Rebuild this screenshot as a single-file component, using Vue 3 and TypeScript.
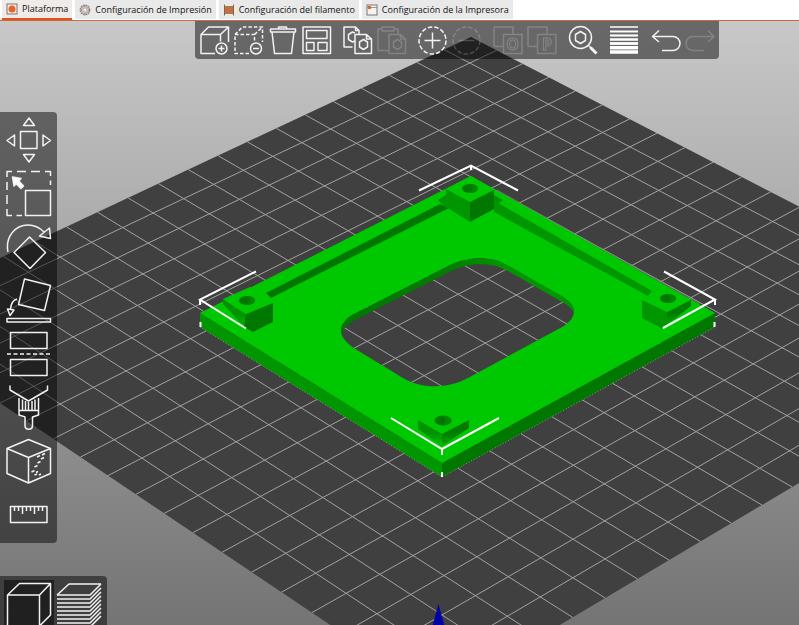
<script setup lang="ts">
import { ref } from 'vue'

type Point = [number, number]

interface Tab {
  id: string
  label: string
}

const tabs: Tab[] = [
  { id: 'plater', label: 'Plataforma' },
  { id: 'print', label: 'Configuración de Impresión' },
  { id: 'filament', label: 'Configuración del filamento' },
  { id: 'printer', label: 'Configuración de la Impresora' },
]
const activeTab = ref('plater')
const activeView = ref('editor')

// Perspective projection of the print bed: u and v run from 0 to 1.
const DIVISIONS = 20
function project(u: number, v: number): Point {
  const w = 1 - 0.11586 * u - 0.10416 * v
  return [
    (455.4 * u - 584.8 * v + 471) / w,
    (259.4 * u + 247.5 * v + 37) / w,
  ]
}
function segment(a: Point, b: Point): string {
  return `M${a[0].toFixed(1)} ${a[1].toFixed(1)}L${b[0].toFixed(1)} ${b[1].toFixed(1)}`
}
const bedOutline = [project(0, 0), project(1, 0), project(1, 1), project(0, 1)]
  .map((p) => p.join(','))
  .join(' ')
const gridPath = Array.from({ length: DIVISIONS - 1 }, (_, i) => (i + 1) / DIVISIONS)
  .map((t) => segment(project(t, 0), project(t, 1)) + segment(project(0, t), project(1, t)))
  .join('')

const windowPath =
  'M352 315L450 265C466 257 490 255 507 265L563 297C578 306 577 317 564 326L468 378C450 388 423 390 403 378L357 350C337 338 336 325 352 315Z'
const platePath = 'M200 313L471 176L715 313L442 463Z'

const layerRows = [14, 18, 22, 26, 30, 34, 38, 42, 46]
</script>

<template>
  <div class="app">
    <nav class="tabs" aria-label="Secciones">
      <button
        v-for="tab in tabs"
        :key="tab.id"
        type="button"
        class="tab"
        :class="{ active: activeTab === tab.id }"
        @click="activeTab = tab.id"
      >
        <svg v-if="tab.id === 'plater'" class="tab-icon" viewBox="0 0 12 12">
          <rect x="1" y="1" width="10" height="10" fill="#fbe9e0" stroke="#777" />
          <circle cx="6" cy="6" r="3.5" fill="#e4662a" />
        </svg>
        <svg v-else-if="tab.id === 'print'" class="tab-icon" viewBox="0 0 12 12" fill="none">
          <circle cx="6" cy="6" r="4.8" stroke="#8a8080" stroke-width="1.2" stroke-dasharray="2 0.5" />
          <circle cx="6" cy="6" r="3.6" stroke="#a59a98" />
          <circle cx="6" cy="6" r="2.200" stroke="#b89a90" fill="#f4f0ee" />
        </svg>
        <svg v-else-if="tab.id === 'filament'" class="tab-icon" viewBox="0 0 12 12">
          <rect x="1" y="2" width="10" height="8" fill="#bb7347" />
          <path d="M1.500 0.500V11.500M10.500 0.500V11.500" stroke="#8b6048" />
        </svg>
        <svg v-else class="tab-icon" viewBox="0 0 12 12">
          <rect x="1" y="1" width="10" height="10" fill="#f6f4f2" stroke="#777" />
          <path d="M1 3.500H11" stroke="#999" />
          <rect x="2" y="2" width="3" height="3" fill="#e4662a" />
        </svg>
        <span>{{ tab.label }}</span>
      </button>
    </nav>

    <main class="viewport">
      <svg class="scene" viewBox="0 21 799 604" preserveAspectRatio="xMidYMin slice">
        <defs>
          <linearGradient id="wall" x1="0" x2="1">
            <stop offset="0" stop-color="#007800" />
            <stop offset="0.45" stop-color="#007d00" />
            <stop offset="0.7" stop-color="#009600" />
            <stop offset="1" stop-color="#009600" />
          </linearGradient>
          <linearGradient id="foot-left" x1="0" x2="0" y1="0" y2="1">
            <stop offset="0.5" stop-color="#009200" />
            <stop offset="1" stop-color="#00be00" />
          </linearGradient>
          <linearGradient id="foot-right" x1="0" x2="0" y1="0" y2="1">
            <stop offset="0.5" stop-color="#007c00" />
            <stop offset="1" stop-color="#00a800" />
          </linearGradient>
          <mask id="wall-mask" maskUnits="userSpaceOnUse" x="320" y="240" width="280" height="160">
            <path :d="windowPath" fill="#fff" />
            <path :d="windowPath" fill="#000" transform="translate(1 6)" />
          </mask>
        </defs>

        <polygon :points="bedOutline" fill="#404040" />
        <path :d="gridPath" stroke="#a2a2a2" stroke-width="1" fill="none" />
        <path d="M438.500 604L444.500 626H432.500Z" fill="#0000a8" />

        <path d="M200 313L442 463V477L200 327Z" fill="#009600" />
        <path d="M442 463L715 313V327L442 477Z" fill="#007800" />
        <path :d="platePath + windowPath" fill="#00c800" fill-rule="evenodd" />
        <path :d="windowPath" fill="url(#wall)" mask="url(#wall-mask)" />
        <path d="M200 327L442 477L715 327" stroke="#b5c8b5" stroke-width="0.6" stroke-dasharray="1 2" fill="none" />
        <path d="M497 190L700 304" stroke="#6f8a6f" stroke-width="0.7" />

        <path d="M266 293L440 204L449 208L271 298Z" fill="#007800" />
        <path d="M494 204L498 203L652 291L648 296L494 212Z" fill="#009600" />
        <path d="M438 200L446 195V208ZM494 195L503 200L494 207Z" fill="#009200" />

        <path d="M471 176L494 190L470 202L446 189Z" fill="#00c800" />
        <path d="M446 189L470 202V222L446 207Z" fill="#009600" />
        <path d="M470 202L494 190V209L470 222Z" fill="#007800" />

        <path d="M223 299L246 314V329L223 304Z" fill="url(#foot-left)" />
        <path d="M223 299L250 287L273 303L246 314Z" fill="#00c800" />
        <path d="M246 314L273 303V322L253 332L244 327Z" fill="#007800" />

        <path d="M667 312L691 300V306L667 325Z" fill="url(#foot-right)" />
        <path d="M642 300L667 312V325L661 328L642 318Z" fill="#009600" />

        <path d="M418 420L442 434V446L418 429Z" fill="url(#foot-left)" />
        <path d="M442 434L469 420V428L442 446Z" fill="url(#foot-right)" />

        <g fill="#007800">
          <ellipse cx="470" cy="188.500" rx="8" ry="4.500" />
          <ellipse cx="247" cy="300.500" rx="8" ry="4.500" />
          <ellipse cx="668" cy="298.500" rx="8" ry="4.500" />
          <ellipse cx="443" cy="420.500" rx="8.500" ry="5" />
        </g>
        <g fill="#008600">
          <path d="M470 184C475 184 478 186 478 189C477 191 474 193 470 193C473 190 473 187 470 184Z" />
          <path d="M247 296C252 296 255 298 255 301C254 303 251 305 247 305C250 302 250 299 247 296Z" />
          <path d="M668 294C673 294 676 296 676 299C675 301 672 303 668 303C671 300 671 297 668 294Z" />
          <path d="M443 416C448 416 451.500 418 451.500 421C451 423 447 425.500 443 425.500C446 422 446 419 443 416Z" />
        </g>

        <g stroke="#fff" stroke-width="2" fill="none">
          <path d="M419 190.500L471 165.500L518 190.500M471 165V170" />
          <path d="M256 271.500L200 299.500L246 328.500M200 299V305" />
          <path d="M664 271.500L715 299.500L663 328M715 299V305" />
          <path d="M391 418L442 449L499 418M442 449V455" />
          <path d="M200.500 322V327M714.500 322V327M442 472V477" />
        </g>
      </svg>

      <div class="toolbar top-bar" role="toolbar" aria-label="Objetos">
        <div class="group">
          <button type="button" class="tool" aria-label="Añadir">
            <svg viewBox="0 0 30 30">
              <path d="M15 28.500H1V9.500L8.500 2H28.500V17M1 9.500H20.500V16.500M20.500 9.500L28.500 2" />
              <circle cx="21.500" cy="23.500" r="5.500" />
              <path d="M18.500 23.500H24.500M21.500 20.500V26.500" />
            </svg>
          </button>
          <button type="button" class="tool" aria-label="Borrar">
            <svg viewBox="0 0 30 30">
              <path stroke-dasharray="3.500 2" d="M15 28.500H1V9.500L8.500 2H28.500V17M1 9.500H20.500V16.500M20.500 9.500L28.500 2" />
              <circle cx="22" cy="23.500" r="5.500" />
              <path d="M19 23.500H25" />
            </svg>
          </button>
          <button type="button" class="tool" aria-label="Borrar todo">
            <svg viewBox="0 0 30 30">
              <path d="M2.500 4H27.500V7H2.500ZM10.500 4V2H18.500V4M4 7L6.500 28.500H23.500L26 7" />
            </svg>
          </button>
          <button type="button" class="tool" aria-label="Organizar">
            <svg viewBox="0 0 30 30">
              <path d="M1 2H28.500V28.500H1ZM4.500 5.500H25V13.500H4.500ZM4.500 17.500H12V25.500H4.500ZM16 17.500H25V25.500H16Z" />
            </svg>
          </button>
        </div>
        <div class="group">
          <button type="button" class="tool" aria-label="Copiar">
            <svg viewBox="0 0 30 30">
              <path d="M9.500 22H1V2H12.500L16 5.500V9M12.500 2V5.500H16M12 9.500H23.500L28.500 14V28.500H12ZM23.500 9.500V14H28.500" />
              <path d="M12 8L9.500 7L5.500 9.500V14.500L9.500 17L12 16M20.500 14.500L24.500 17V22L20.500 24.500L16.500 22V17Z" />
            </svg>
          </button>
          <button type="button" class="tool" aria-label="Pegar" disabled>
            <svg viewBox="0 0 30 30">
              <path d="M11 25.500H1V4H5M17 4H21V9M5 2H17V6H5ZM12 9.500H23.500L28.500 14V28.500H12ZM23.500 9.500V14H28.500" />
              <path d="M20.500 14.500L24.500 17V22L20.500 24.500L16.500 22V17Z" />
            </svg>
          </button>
        </div>
        <div class="group">
          <button type="button" class="tool" aria-label="Añadir instancia">
            <svg viewBox="0 0 30 30">
              <circle cx="14.500" cy="15.500" r="13.500" stroke-dasharray="4.500 2" />
              <path d="M6.500 15.500H22.500M14.500 7.500V23.500" />
            </svg>
          </button>
          <button type="button" class="tool" aria-label="Eliminar instancia" disabled>
            <svg viewBox="0 0 30 30">
              <circle cx="14.500" cy="15.500" r="13.500" stroke-dasharray="4.500 2" />
              <path d="M6.500 15.500H22.500" />
            </svg>
          </button>
        </div>
        <div class="group">
          <button type="button" class="tool" aria-label="Separar en objetos" disabled>
            <svg viewBox="0 0 30 30">
              <path d="M10 21.500H1V2H20V9.500M10.500 9.500H29V28.500H10.500Z" />
              <text x="19.500" y="25">O</text>
            </svg>
          </button>
          <button type="button" class="tool" aria-label="Separar en partes" disabled>
            <svg viewBox="0 0 30 30">
              <path d="M10 21.500H1V2H20V9.500M10.500 9.500H29V28.500H10.500Z" />
              <text x="20" y="25">P</text>
            </svg>
          </button>
        </div>
        <div class="group">
          <button type="button" class="tool" aria-label="Buscar">
            <svg viewBox="0 0 30 30">
              <circle cx="12.500" cy="12.500" r="11" />
              <path d="M12.500 6.500L17.500 9.500V15.500L12.500 18.500L7.500 15.500V9.500Z" />
              <path d="M20.500 20.500L23 23" />
              <path d="M22.500 22.500L28.500 28.500" stroke-width="3" />
            </svg>
          </button>
        </div>
        <div class="group">
          <button type="button" class="tool" aria-label="Altura de capa variable">
            <svg class="bars" viewBox="0 0 30 30">
              <path d="M1 2H29" stroke-width="1.500" />
              <path d="M1 6.500H29" stroke-width="2" />
              <path d="M1 10.500H29" stroke-width="2.200" />
              <path d="M1 14.500H29" stroke-width="2.500" />
              <path d="M1 18.500H29" stroke-width="2.800" />
              <path d="M1 22.700H29M1 27H29" stroke-width="3.400" />
            </svg>
          </button>
        </div>
        <div class="group">
          <button type="button" class="tool" aria-label="Deshacer">
            <svg viewBox="0 0 30 30">
              <path d="M9 5.500L2.500 11.500L9 17M2.500 11.500H23A7 7 0 0 1 23 25.500H12" />
            </svg>
          </button>
          <button type="button" class="tool" aria-label="Rehacer" disabled>
            <svg viewBox="0 0 30 30">
              <path d="M24 5.500L30 11.500L24 17M30 11.500H9A7 7 0 0 0 9 25.500H20" />
            </svg>
          </button>
        </div>
      </div>

      <div class="toolbar side-bar" role="toolbar" aria-label="Transformar">
        <button type="button" class="gizmo" aria-label="Mover">
          <svg viewBox="0 0 46 46">
            <path d="M14.500 14.500H31V31.500H14.500ZM17.500 8.500H28.500L23 1ZM17.500 37.500H28.500L23 45ZM8.500 18V29L1 23.500ZM37 18V29L44.500 23.500Z" />
          </svg>
        </button>
        <button type="button" class="gizmo" aria-label="Escalar">
          <svg viewBox="0 0 46 46">
            <path d="M1 7V1.500H6M11 1.500H20M25 1.500H34M39 1.500H44.500V6M44.500 10.500V15M1 12V20M1 25V34M1 39V45.500H6M10.500 45.500H16" />
            <path d="M19.500 20.500H44.500V45.500H19.500Z" />
            <path class="solid" d="M6.500 7L15 8.500L12.800 11L17.500 16L15 18.500L10.200 13.700L8 16Z" />
          </svg>
        </button>
        <button type="button" class="gizmo" aria-label="Rotar">
          <svg viewBox="0 0 46 46">
            <path d="M2 29C-1 14 9 2 22 2C29 2 34 5 38 9M33.500 13L43.500 5L44.500 15.500ZM23.500 14L39.500 29.500L24 45.500L8 29.500Z" />
          </svg>
        </button>
        <button type="button" class="gizmo" aria-label="Poner en cara">
          <svg viewBox="0 0 46 46">
            <path d="M18.500 3L44.500 9.500L38.500 34.500L12.500 28.500ZM11 23C7 24 5 28 4.500 33M1.500 33L8 34L4 39.500ZM1 42.500H44.500V46H1Z" />
          </svg>
        </button>
        <button type="button" class="gizmo" aria-label="Cortar">
          <svg viewBox="0 0 46 46">
            <path d="M4.500 3.500H41V19.500H4.500ZM4.500 30.500H41V46.500H4.500Z" />
            <path d="M1 25H45" stroke-dasharray="4 2.500" />
          </svg>
        </button>
        <button type="button" class="gizmo" aria-label="Pintar soportes">
          <svg viewBox="0 0 46 46">
            <path d="M4 3.500V8L22.500 19L41.500 8V3.500M13 16V33L19 35V43.500C19 48.500 26.500 48.500 26.500 43.500V35L32.500 33V16M13 28.500H32.500M16.500 17.500V28.500M19.500 19V28.500M22.500 20V28.500M26 19V28.500M29 17.500V28.500" />
          </svg>
        </button>
        <button type="button" class="gizmo" aria-label="Pintar costuras">
          <svg viewBox="0 0 46 46">
            <path d="M1 13.500L22.500 4.500L44.500 13.500V38.500L22.500 48L1 38.500ZM1 13.500L22.500 22.500L44.500 13.500M22.500 22.500V48" />
            <path d="M31 22L34 20.500M36 20L39 18.500M35 24L38 22.500M31.500 28L34.500 26.500M28.500 32L31.500 30.500M25.500 37L28.500 35.500M30 37.500L32 36.500M28.500 40L31 39M33 40L35 39" />
          </svg>
        </button>
        <button type="button" class="gizmo" aria-label="Medir">
          <svg viewBox="0 0 46 46">
            <path d="M4.500 18.500H41V34.500H4.500ZM8.500 18.500V23M12.500 18.500V23M16.500 18.500V26M20.500 18.500V23M24.500 18.500V23M28.500 18.500V26M32.500 18.500V23M36.500 18.500V23" />
          </svg>
        </button>
      </div>

      <div class="toolbar view-bar" role="toolbar" aria-label="Vista">
        <button
          type="button"
          class="view"
          :class="{ active: activeView === 'editor' }"
          aria-label="Vista del editor 3D"
          @click="activeView = 'editor'"
        >
          <svg viewBox="0 0 50 50">
            <path d="M3.500 48V15L15.500 3.500H46.500V35L35.500 46M3.500 15H35.500V48M35.500 15L46.500 3.500" />
          </svg>
        </button>
        <button
          type="button"
          class="view"
          :class="{ active: activeView === 'preview' }"
          aria-label="Vista previa"
          @click="activeView = 'preview'"
        >
          <svg viewBox="0 0 50 50">
            <path d="M3 15L15 4H47" />
            <path v-for="y in layerRows" :key="y" :d="`M3 ${y + 1}H36L47 ${y - 10}`" />
          </svg>
        </button>
      </div>
    </main>
  </div>
</template>

<style>
body {
  margin: 0;
}
</style>

<style scoped>
.app {
  display: flex;
  flex-direction: column;
  height: 100vh;
  overflow: hidden;
  background: #fff;
  font-family: "Open Sans", "Noto Sans", sans-serif;
}

button {
  margin: 0;
  padding: 0;
  border: 0;
  background: none;
  font: inherit;
  color: inherit;
}

.tabs {
  display: flex;
  gap: 3px;
  flex: none;
  height: 20px;
  padding-left: 2px;
  border-bottom: 1px solid #cf6a3c;
}

.tab {
  display: flex;
  align-items: center;
  gap: 4px;
  height: 19px;
  padding: 0 4px;
  background: #e9e9e9;
  color: #111;
  font-size: 9px;
  line-height: 16px;
  white-space: nowrap;
}

.tab.active {
  height: 20px;
  border-bottom: 2px solid #e0541c;
  background: #f0ebe9;
  box-sizing: border-box;
}

.tab-icon {
  width: 12px;
  height: 12px;
}

.viewport {
  position: relative;
  flex: 1;
  min-height: 0;
  overflow: hidden;
  background: linear-gradient(#c8c8c8, #747474);
}

.scene {
  display: block;
  width: 100%;
  height: 100%;
}

.toolbar {
  position: absolute;
  display: flex;
  background: rgba(0, 0, 0, 0.48);
}

.toolbar svg {
  display: block;
  width: 100%;
  height: 100%;
  overflow: visible;
  fill: none;
  stroke: #f2f2f2;
  stroke-width: 1.5;
  stroke-linejoin: round;
}

.toolbar .solid {
  fill: #fff;
}

.toolbar .bars {
  stroke: #fff;
}

.toolbar text {
  fill: none;
  stroke: #fff;
  stroke-width: 1;
  font-size: 16px;
  font-weight: 700;
  text-anchor: middle;
}

.top-bar {
  top: 0;
  left: 195px;
  gap: 11px;
  padding: 4px 5px;
  border-radius: 0 0 4px 4px;
}

.group {
  display: flex;
  gap: 4px;
}

.tool {
  width: 30px;
  height: 30px;
}

.tool:disabled {
  opacity: 0.2;
}

.side-bar {
  top: 91px;
  left: 0;
  flex-direction: column;
  gap: 7px;
  padding: 5px 5px 9px 6px;
  border-radius: 0 4px 4px 0;
}

.gizmo {
  width: 46px;
  height: 46px;
}

.view-bar {
  bottom: 0;
  left: 0;
  height: 45px;
  padding: 4px 3px 0 4px;
  border-radius: 0 4px 0 0;
  overflow: hidden;
}

.view {
  width: 50px;
  height: 50px;
}

.view.active {
  background: #202020;
}
</style>
